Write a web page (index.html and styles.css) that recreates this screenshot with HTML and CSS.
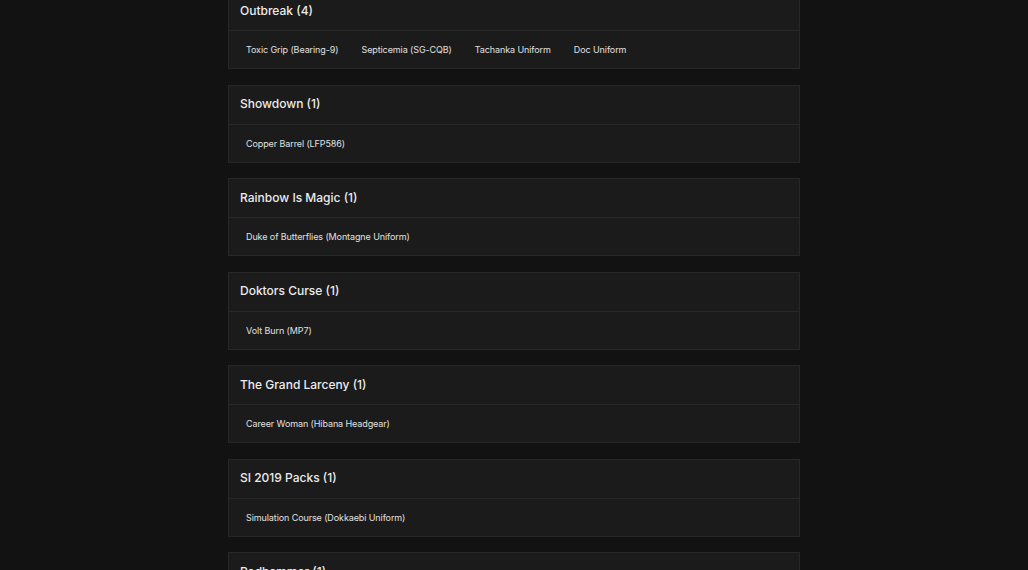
FILE: index.html
```html
<!DOCTYPE html>
<html>
<head>
<meta charset="utf-8">
<link rel="stylesheet" href="styles.css">
</head>
<body>
<main class="list">
  <section class="card">
    <h2 class="card-title">Outbreak (4)</h2>
    <div class="card-body">
      <span class="item">Toxic Grip (Bearing-9)</span>
      <span class="item">Septicemia (SG-CQB)</span>
      <span class="item">Tachanka Uniform</span>
      <span class="item">Doc Uniform</span>
    </div>
  </section>
  <section class="card">
    <h2 class="card-title">Showdown (1)</h2>
    <div class="card-body">
      <span class="item">Copper Barrel (LFP586)</span>
    </div>
  </section>
  <section class="card">
    <h2 class="card-title">Rainbow Is Magic (1)</h2>
    <div class="card-body">
      <span class="item">Duke of Butterflies (Montagne Uniform)</span>
    </div>
  </section>
  <section class="card">
    <h2 class="card-title">Doktors Curse (1)</h2>
    <div class="card-body">
      <span class="item">Volt Burn (MP7)</span>
    </div>
  </section>
  <section class="card">
    <h2 class="card-title">The Grand Larceny (1)</h2>
    <div class="card-body">
      <span class="item">Career Woman (Hibana Headgear)</span>
    </div>
  </section>
  <section class="card">
    <h2 class="card-title">SI 2019 Packs (1)</h2>
    <div class="card-body">
      <span class="item">Simulation Course (Dokkaebi Uniform)</span>
    </div>
  </section>
  <section class="card">
    <h2 class="card-title">Redhammer (1)</h2>
    <div class="card-body">
      <span class="item">Redhammer</span>
    </div>
  </section>
</main>
</body>
</html>
```
FILE: styles.css
```css
html, body {
  margin: 0;
  padding: 0;
  background: #121212;
  overflow: hidden;
}
body {
  font-family: Inter, "Open Sans", "Liberation Sans", sans-serif;
  color: #e6e6e6;
}
.list {
  width: 572px;
  margin: -9px auto 0;
  display: flex;
  flex-direction: column;
  gap: 15.5px;
}
.card {
  background: #1b1b1b;
  border: 1px solid #272727;
  box-sizing: border-box;
}
.card-title {
  margin: 0;
  height: 38px;
  box-sizing: border-box;
  display: flex;
  align-items: center;
  padding: 0 11px 2px;
  font-size: 12px;
  font-weight: 500;
  color: #ececec;
  border-bottom: 1px solid #272727;
  box-sizing: content-box;
  height: 36px;
}
.card-body {
  height: 37px;
  display: flex;
  align-items: center;
  gap: 23px;
  padding: 0 17px;
  font-size: 9px;
  letter-spacing: -0.1px;
  color: #e0e0e0;
}
```
